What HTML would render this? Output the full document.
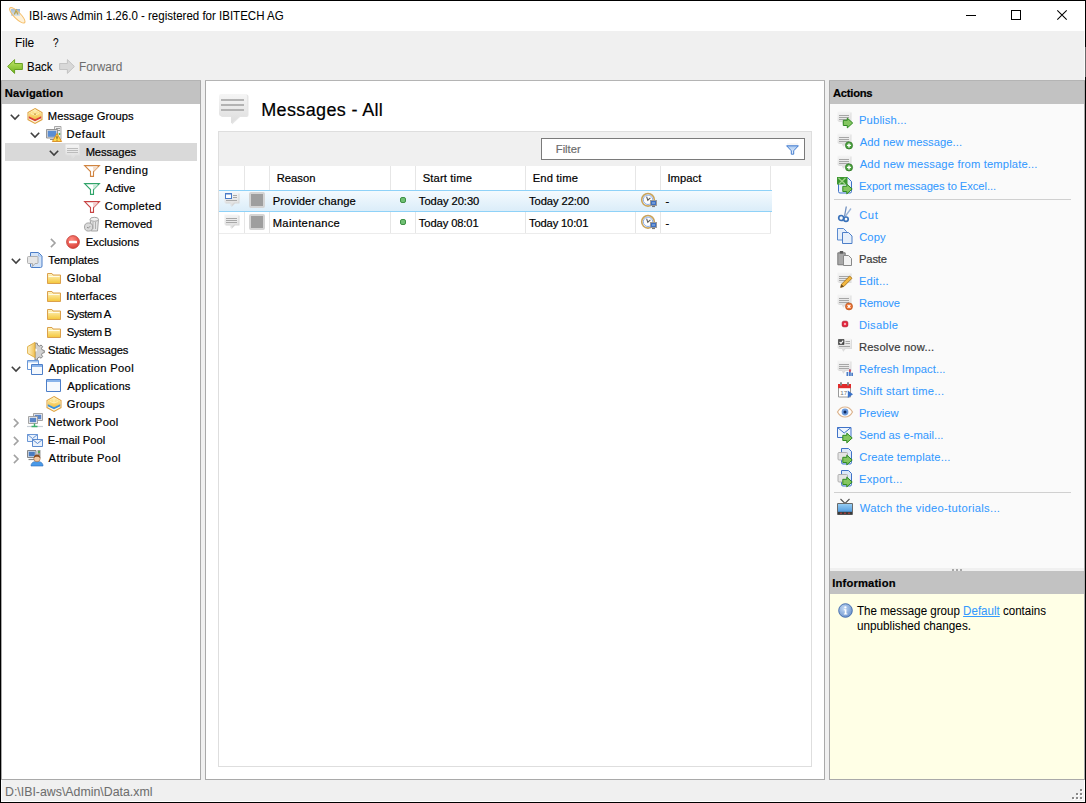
<!DOCTYPE html>
<html><head><meta charset="utf-8">
<style>
*{margin:0;padding:0;box-sizing:border-box}
html,body{width:1086px;height:803px;overflow:hidden;background:#000}
body{position:relative;font-family:"Liberation Sans",sans-serif;font-size:11px;color:#000}
.a{position:absolute}
.t{position:absolute;white-space:nowrap;line-height:16px;height:16px;-webkit-text-stroke:0.2px currentColor}
svg.i{position:absolute;overflow:visible}
</style></head><body>
<svg width="0" height="0" style="position:absolute">
<defs>
<linearGradient id="gMsg" x1="0" y1="0" x2="0" y2="1"><stop offset="0" stop-color="#f5f5f5"/><stop offset="1" stop-color="#dddddd"/></linearGradient>
<linearGradient id="gFold" x1="0" y1="0" x2="0" y2="1"><stop offset="0" stop-color="#fff6c8"/><stop offset="1" stop-color="#f4c638"/></linearGradient>
<linearGradient id="gHex" x1="0" y1="0" x2="0" y2="1"><stop offset="0" stop-color="#fff0b0"/><stop offset="1" stop-color="#f2c040"/></linearGradient>
</defs></svg>
<div class="a" style="left:1px;top:1px;width:1084px;height:801px;background:#f0f0f0;"></div>
<div class="a" style="left:1px;top:1px;width:1084px;height:30px;background:#ffffff;"></div>
<div class="a" style="left:1084px;top:31px;width:1px;height:49px;background:#fafafa;"></div>
<div class="a" style="left:1085px;top:47px;width:1px;height:30px;background:#6a6a6a;"></div>
<div class="a" style="left:1px;top:31px;width:1px;height:49px;background:#fafafa;"></div>
<div class="a" style="left:1px;top:801px;width:1084px;height:1px;background:#ffffff;"></div>
<div class="a" style="left:1084px;top:780px;width:1px;height:22px;background:#ffffff;"></div>
<div class="a" style="left:1px;top:780px;width:1px;height:22px;background:#fafafa;"></div>
<svg class="i" style="left:9px;top:7px" width="16" height="16" viewBox="0 0 16 16"><defs><linearGradient id="gTi" x1="0" y1="0" x2="0" y2="1"><stop offset="0" stop-color="#7fa6d2"/><stop offset="1" stop-color="#c8dcf2"/></linearGradient></defs><ellipse cx="8.3" cy="8.3" rx="10.4" ry="3.3" transform="rotate(45 8.3 8.3)" fill="#fde9c4" fill-opacity=".7"/><rect x="2" y="2" width="9" height="7" fill="url(#gTi)" opacity=".9"/><path d="M5.3 7.6L7.1 3.4 8.9 7.6" fill="none" stroke="#a08a22" stroke-width="1.3"/><ellipse cx="8.3" cy="8.3" rx="10.4" ry="3.3" transform="rotate(45 8.3 8.3)" fill="#fff5e0" fill-opacity=".25" stroke="#f4bd68" stroke-width=".95"/></svg>
<div class="t" style="left:29.35px;top:7.56px;font-size:12.80px;transform:scaleX(0.8996);transform-origin:0 0;-webkit-text-stroke:0.05px currentColor">IBI-aws Admin 1.26.0 - registered for IBITECH AG</div>
<div class="a" style="left:966px;top:15px;width:10px;height:1px;background:#000;"></div>
<div class="a" style="left:1011px;top:10px;width:10px;height:10px;background:transparent;border:1px solid #000"></div>
<svg class="i" style="left:1057px;top:10px" width="10" height="10" viewBox="0 0 10 10"><path d="M.3 .3l9.4 9.4M9.7 .3L.3 9.7" stroke="#000" stroke-width="1.05"/></svg>
<div class="t" style="left:15.39px;top:34.67px;font-size:12.50px;transform:scaleX(0.9547);transform-origin:0 0;-webkit-text-stroke:0.05px currentColor">File</div>
<div class="t" style="left:52.84px;top:34.67px;font-size:12.50px;transform:scaleX(0.8046);transform-origin:0 0;-webkit-text-stroke:0.05px currentColor">?</div>
<svg class="i" style="left:7px;top:59px" width="16" height="15" viewBox="0 0 16 15"><defs><linearGradient id="gBk" x1="0" y1="0" x2="0" y2="1"><stop offset="0" stop-color="#c4e86a"/><stop offset="1" stop-color="#6eb21c"/></linearGradient></defs><path d="M.6 7.5L7.6.6v3.9h7.8v6H7.6v3.9z" fill="url(#gBk)" stroke="#5e9a16" stroke-width=".9"/></svg>
<div class="t" style="left:26.52px;top:58.67px;font-size:12.50px;transform:scaleX(0.9189);transform-origin:0 0;-webkit-text-stroke:0.05px currentColor">Back</div>
<svg class="i" style="left:59px;top:59px" width="16" height="15" viewBox="0 0 16 15"><path d="M15.4 7.5L8.4.6v3.9H.6v6h7.8v3.9z" fill="#d8d8d8" stroke="#c0c0c0" stroke-width=".9"/></svg>
<div class="t" style="left:78.79px;top:58.67px;font-size:12.50px;color:#6d6d6d;transform:scaleX(0.9454);transform-origin:0 0;-webkit-text-stroke:0.05px currentColor">Forward</div>
<div class="a" style="left:1px;top:80px;width:200px;height:700px;background:#ffffff;border:1px solid #a9a9a9"></div>
<div class="a" style="left:2px;top:81px;width:198px;height:23px;background:#c2c2c2;"></div>
<div class="a" style="left:1px;top:80px;width:200px;height:1px;background:#b4b4b4;"></div>
<div class="t" style="left:4.84px;top:85.12px;font-size:11.20px;letter-spacing:0.106px;font-weight:bold">Navigation</div>
<div class="a" style="left:5px;top:143px;width:192px;height:18px;background:#d9d9d9;"></div>
<svg class="i" style="left:10px;top:114px;" width="10" height="6" viewBox="0 0 10 6"><path d="M.8 .8L5 5 9.2 .8" fill="none" stroke="#404040" stroke-width="1.6"/></svg>
<svg class="i" style="left:27px;top:108px;" width="16" height="16" viewBox="0 0 16 16"><path d="M8 .6l7 3.9v7.1L8 15.4 1 11.6V4.5z" fill="#fff8e0" stroke="#dfa444" stroke-width="1.1"/><path d="M1.8 4.9L8 1.5l6.2 3.4v3.6L8 11.4 1.8 8.5z" fill="url(#gHex)"/><path d="M8 1.5v5.5M4 5.5l4 1.5 4-1.5" fill="none" stroke="#fff4c0" stroke-width=".8"/><path d="M7.3 5.4h1.4v1.4H7.3z" fill="#b07a20"/><path d="M1.8 8.2L8 11.2l6.2-3v2L8 13.2 1.8 10.2z" fill="#d83e34"/></svg>
<div class="t" style="left:47.84px;top:108.12px;font-size:11.20px;letter-spacing:0.042px">Message Groups</div>
<svg class="i" style="left:30px;top:132px;" width="10" height="6" viewBox="0 0 10 6"><path d="M.8 .8L5 5 9.2 .8" fill="none" stroke="#404040" stroke-width="1.6"/></svg>
<svg class="i" style="left:46px;top:126px;" width="16" height="16" viewBox="0 0 16 16"><path d="M8.5 .5h6.5v13H8.5z" fill="#ececec" stroke="#a0a0a0" stroke-width=".9"/><path d="M10 2.5h4M10 4.5h4" stroke="#9a9a9a" stroke-width="1"/><circle cx="13.5" cy="8" r=".9" fill="#3cb040"/><path d="M.5 3.5h11v8.5H.5z" fill="#d8d8d8" stroke="#8c8c8c" stroke-width=".9"/><path d="M1.8 4.8h8.4v6H1.8z" fill="#5a8dd2"/><path d="M4 13.5h4" stroke="#8c8c8c" stroke-width="1"/><path d="M11 7.5l4.6 8h-9.2z" fill="#ffd84a" stroke="#d88a20" stroke-width=".9"/><path d="M11 10.2v2.6M11 13.8v.8" stroke="#6a4a10" stroke-width="1.1"/></svg>
<div class="t" style="left:66.54px;top:126.12px;font-size:11.20px;letter-spacing:0.480px">Default</div>
<svg class="i" style="left:49px;top:150px;" width="10" height="6" viewBox="0 0 10 6"><path d="M.8 .8L5 5 9.2 .8" fill="none" stroke="#404040" stroke-width="1.6"/></svg>
<svg class="i" style="left:65px;top:144px;" width="16" height="16" viewBox="0 0 16 16"><path d="M1.5 1.5h13.5v10H10.5l-3 3.5v-3.5H1.5z" fill="#e0e0e0"/><path d="M.5 .5h13.5v10H9.5l-3 3.5v-3.5H.5z" fill="url(#gMsg)"/><path d="M2 4.5h11M2 6.5h11M2 8.5h11" stroke="#bcbcbc" stroke-width="1"/></svg>
<div class="t" style="left:85.64px;top:144.12px;font-size:11.20px;letter-spacing:-0.070px">Messages</div>
<svg class="i" style="left:84px;top:165px;" width="16" height="12" viewBox="0 0 16 12"><path d="M.6 .6h14.8L9.5 6.6v4.8h-3V6.6z" fill="#fff" stroke="#d08440" stroke-width="1.1"/><path d="M9 2h5L9.5 6.5z" fill="#f4dcc8"/></svg>
<div class="t" style="left:104.54px;top:162.12px;font-size:11.20px;letter-spacing:0.382px">Pending</div>
<svg class="i" style="left:84px;top:183px;" width="16" height="12" viewBox="0 0 16 12"><path d="M.6 .6h14.8L9.5 6.6v4.8h-3V6.6z" fill="#fff" stroke="#30a46a" stroke-width="1.1"/><path d="M9 2h5L9.5 6.5z" fill="#c8ecd8"/></svg>
<div class="t" style="left:105.30px;top:180.12px;font-size:11.20px;letter-spacing:-0.127px">Active</div>
<svg class="i" style="left:84px;top:201px;" width="16" height="12" viewBox="0 0 16 12"><path d="M.6 .6h14.8L9.5 6.6v4.8h-3V6.6z" fill="#fff" stroke="#c84444" stroke-width="1.1"/><path d="M9 2h5L9.5 6.5z" fill="#f2cccc"/></svg>
<div class="t" style="left:104.79px;top:198.12px;font-size:11.20px;letter-spacing:0.294px">Completed</div>
<svg class="i" style="left:84px;top:216px;" width="16" height="16" viewBox="0 0 16 16"><path d="M6.2 3.5h8.3l-1 11.5H7.2z" fill="#e4e4e4" stroke="#9c9c9c" stroke-width=".9"/><path d="M9 6v7M11.5 6v7" stroke="#b0b0b0" stroke-width="1"/><ellipse cx="10.3" cy="3.3" rx="4.2" ry="2" fill="#f2f2f2" stroke="#9c9c9c" stroke-width=".9"/><circle cx="4.6" cy="11" r="4.1" fill="#dadada" stroke="#9c9c9c" stroke-width=".9"/><path d="M3 11l1.2 1.2 2-2" fill="none" stroke="#8a8a8a" stroke-width=".9"/></svg>
<div class="t" style="left:104.54px;top:216.12px;font-size:11.20px;letter-spacing:-0.014px">Removed</div>
<svg class="i" style="left:50px;top:238px;" width="6" height="10" viewBox="0 0 6 10"><path d="M.9 .9L5 5 .9 9.1" fill="none" stroke="#a2a2a2" stroke-width="1.6"/></svg>
<svg class="i" style="left:66px;top:235px;" width="14" height="14" viewBox="0 0 14 14"><defs><radialGradient id="gEx" cx=".4" cy=".3" r=".75"><stop offset="0" stop-color="#ff8a80"/><stop offset="1" stop-color="#d83c34"/></radialGradient></defs><circle cx="7" cy="7" r="6.4" fill="url(#gEx)" stroke="#c03a32" stroke-width=".8"/><rect x="3" y="5.7" width="8" height="2.6" rx=".6" fill="#fff"/></svg>
<div class="t" style="left:85.64px;top:234.12px;font-size:11.20px">Exclusions</div>
<svg class="i" style="left:11px;top:258px;" width="10" height="6" viewBox="0 0 10 6"><path d="M.8 .8L5 5 9.2 .8" fill="none" stroke="#404040" stroke-width="1.6"/></svg>
<svg class="i" style="left:27px;top:252px;" width="16" height="16" viewBox="0 0 16 16"><path d="M3.5 .5h8l3.5 3.5v10a1.5 1.5 0 0 1-1.5 1.5H5a1.5 1.5 0 0 1-1.5-1.5z" fill="#d4e4f8" stroke="#4c7ec8" stroke-width="1"/><path d="M11.5 .8v3.2h3.2" fill="none" stroke="#8fb2e4" stroke-width=".8"/><path d="M.5 5.5a1 1 0 0 1 1-1h8.5a1 1 0 0 1 1 1v5a1 1 0 0 1-1 1H8l-2.5 3v-3h-4a1 1 0 0 1-1-1z" fill="#e6e6e6" stroke="#a8a8a8" stroke-width=".9"/></svg>
<div class="t" style="left:48.35px;top:252.12px;font-size:11.20px;letter-spacing:-0.050px">Templates</div>
<svg class="i" style="left:47px;top:273px;" width="14" height="11" viewBox="0 0 14 11"><path d="M.5 .5h4.5l1 1.5h7.5v8.5h-13z" fill="url(#gFold)" stroke="#dba04c" stroke-width="1"/><path d="M1.5 3.5h11" stroke="#fffbe6" stroke-width="1"/></svg>
<div class="t" style="left:66.79px;top:270.12px;font-size:11.20px;letter-spacing:0.398px">Global</div>
<svg class="i" style="left:47px;top:291px;" width="14" height="11" viewBox="0 0 14 11"><path d="M.5 .5h4.5l1 1.5h7.5v8.5h-13z" fill="url(#gFold)" stroke="#dba04c" stroke-width="1"/><path d="M1.5 3.5h11" stroke="#fffbe6" stroke-width="1"/></svg>
<div class="t" style="left:66.28px;top:288.12px;font-size:11.20px;letter-spacing:0.138px">Interfaces</div>
<svg class="i" style="left:47px;top:309px;" width="14" height="11" viewBox="0 0 14 11"><path d="M.5 .5h4.5l1 1.5h7.5v8.5h-13z" fill="url(#gFold)" stroke="#dba04c" stroke-width="1"/><path d="M1.5 3.5h11" stroke="#fffbe6" stroke-width="1"/></svg>
<div class="t" style="left:66.79px;top:306.12px;font-size:11.20px;letter-spacing:-0.406px">System A</div>
<svg class="i" style="left:47px;top:327px;" width="14" height="11" viewBox="0 0 14 11"><path d="M.5 .5h4.5l1 1.5h7.5v8.5h-13z" fill="url(#gFold)" stroke="#dba04c" stroke-width="1"/><path d="M1.5 3.5h11" stroke="#fffbe6" stroke-width="1"/></svg>
<div class="t" style="left:66.79px;top:324.12px;font-size:11.20px;letter-spacing:-0.405px">System B</div>
<svg class="i" style="left:27px;top:342px;" width="16" height="16" viewBox="0 0 16 16"><defs><linearGradient id="gSt" x1="0" y1="0" x2="1" y2="0"><stop offset="0" stop-color="#fff4cc"/><stop offset="1" stop-color="#f0c050"/></linearGradient></defs><path d="M8 1.2h2.2l.5 2 1.6.9 1.8-1.1 1.5 1.6-1.1 1.8.8 1.6 2 .5v2.2l-2 .5-.8 1.6 1.1 1.8-1.5 1.6-1.8-1.1-1.6.9-.5 2H8z" fill="#d2d2d2" stroke="#7c7c7c" stroke-width=".9"/><circle cx="8.4" cy="8" r="1.6" fill="#fff"/><path d="M.6 4.6L8 .4v15.2L.6 11.4z" fill="url(#gSt)" stroke="#dcaa40" stroke-width=".9"/></svg>
<div class="t" style="left:48.09px;top:342.12px;font-size:11.20px;letter-spacing:-0.121px">Static Messages</div>
<svg class="i" style="left:11px;top:366px;" width="10" height="6" viewBox="0 0 10 6"><path d="M.8 .8L5 5 9.2 .8" fill="none" stroke="#404040" stroke-width="1.6"/></svg>
<svg class="i" style="left:27px;top:360px;" width="16" height="15" viewBox="0 0 16 15"><path d="M.5 .5h11v9H.5z" fill="#fff" stroke="#6a98d8" stroke-width="1"/><path d="M1 1h10v1.5H1z" fill="#a8c8f0"/><path d="M4.5 4.5h11v10h-11z" fill="#f4f8fd" stroke="#4c7ec8" stroke-width="1"/><path d="M5 5h10v2H5z" fill="#8ab4ea"/></svg>
<div class="t" style="left:48.60px;top:360.12px;font-size:11.20px;letter-spacing:0.322px">Application Pool</div>
<svg class="i" style="left:46px;top:379px;" width="15" height="13" viewBox="0 0 15 13"><path d="M.5 .5h14v12H.5z" fill="#f6f9fd" stroke="#4c7ec8" stroke-width="1"/><path d="M1 1h13v2H1z" fill="#8ab4ea"/></svg>
<div class="t" style="left:67.30px;top:378.12px;font-size:11.20px;letter-spacing:0.257px">Applications</div>
<svg class="i" style="left:46px;top:396px;" width="16" height="16" viewBox="0 0 16 16"><path d="M8 .6l7 3.9v7.1L8 15.4 1 11.6V4.5z" fill="#fff8e0" stroke="#dfa444" stroke-width="1.1"/><path d="M1.8 4.9L8 1.5l6.2 3.4v3.6L8 11.4 1.8 8.5z" fill="url(#gHex)"/><path d="M8 1.5v5.5M4 5.5l4 1.5 4-1.5" fill="none" stroke="#fff4c0" stroke-width=".8"/><path d="M1.8 8.2L8 11.2l6.2-3v2L8 13.2 1.8 10.2z" fill="#3a90d8"/></svg>
<div class="t" style="left:66.79px;top:396.12px;font-size:11.20px;letter-spacing:0.242px">Groups</div>
<svg class="i" style="left:13px;top:418px;" width="6" height="10" viewBox="0 0 6 10"><path d="M.9 .9L5 5 .9 9.1" fill="none" stroke="#a2a2a2" stroke-width="1.6"/></svg>
<svg class="i" style="left:27px;top:413px;" width="16" height="15" viewBox="0 0 16 15"><path d="M6.5 .5h9v7h-9z" fill="#ececf0" stroke="#9a9a9a" stroke-width=".9"/><path d="M7.8 1.8h6.4v4.4H7.8z" fill="#5a86c8"/><path d="M1.5 3.5h9v7h-9z" fill="#f0f0f0" stroke="#9a9a9a" stroke-width=".9"/><path d="M2.8 4.8h6.4v4.4H2.8z" fill="#5a86c8"/><path d="M0 13.5h16" stroke="#c8d0d8" stroke-width="1.2"/><path d="M4.5 13.5h6M7.5 10.5v3" stroke="#3cb06a" stroke-width="1.4"/></svg>
<div class="t" style="left:47.84px;top:414.12px;font-size:11.20px;letter-spacing:0.358px">Network Pool</div>
<svg class="i" style="left:13px;top:436px;" width="6" height="10" viewBox="0 0 6 10"><path d="M.9 .9L5 5 .9 9.1" fill="none" stroke="#a2a2a2" stroke-width="1.6"/></svg>
<svg class="i" style="left:27px;top:434px;" width="16" height="13" viewBox="0 0 16 13"><path d="M.5 .5h10v7H.5z" fill="#eaf2fc" stroke="#5a8ad0" stroke-width=".9"/><path d="M.5 .5l5 4 5-4" fill="none" stroke="#5a8ad0" stroke-width=".9"/><path d="M5.5 5.5h10v7h-10z" fill="#eaf2fc" stroke="#4c7ec8" stroke-width=".9"/><path d="M5.5 5.5l5 4 5-4" fill="none" stroke="#4c7ec8" stroke-width=".9"/></svg>
<div class="t" style="left:47.84px;top:432.12px;font-size:11.20px;letter-spacing:0.025px">E-mail Pool</div>
<svg class="i" style="left:13px;top:454px;" width="6" height="10" viewBox="0 0 6 10"><path d="M.9 .9L5 5 .9 9.1" fill="none" stroke="#a2a2a2" stroke-width="1.6"/></svg>
<svg class="i" style="left:27px;top:450px;" width="16" height="16" viewBox="0 0 16 16"><path d="M.5 .5h8.5v7H.5z" fill="#cfd8e4" stroke="#7a7a7a" stroke-width=".9"/><path d="M1.8 1.8h6v4.4h-6z" fill="#4a7cc0"/><path d="M10.5 0h3v8h-3z" fill="#9a9a9a"/><circle cx="12" cy="2" r=".9" fill="#3cb040"/><path d="M1.5 9.5h6" stroke="#888" stroke-width="1.2"/><path d="M4 16c0-3.4 2.6-4.6 6-4.6s6 1.2 6 4.6z" fill="#4a9ae8" stroke="#2a6ab8" stroke-width=".6"/><circle cx="10" cy="8.6" r="3.2" fill="#f4c8a0" stroke="#8a5a30" stroke-width=".5"/><path d="M6.8 8.2c0-2.4 1.4-3.6 3.2-3.6s3.2 1.2 3.2 3.6c-.8-1-1.8-1.4-3.2-1.4s-2.4.4-3.2 1.4z" fill="#8a4a1c"/></svg>
<div class="t" style="left:48.60px;top:450.12px;font-size:11.20px;letter-spacing:0.362px">Attribute Pool</div>
<div class="a" style="left:205px;top:80px;width:620px;height:700px;background:#ffffff;border:1px solid #a9a9a9"></div>
<div class="a" style="left:205px;top:80px;width:620px;height:1px;background:#b4b4b4;"></div>
<svg class="i" style="left:218px;top:93px" width="32" height="32" viewBox="0 0 32 32"><path d="M2.5 3.5a2 2 0 0 1 2-2h24a2 2 0 0 1 2 2v18.5a2 2 0 0 1-2 2H22l-8 7.5v-7.5H4.5a2 2 0 0 1-2-2z" fill="#d0d0d0" opacity=".55"/><path d="M1 3a2 2 0 0 1 2-2h24a2 2 0 0 1 2 2v18a2 2 0 0 1-2 2H21.5l-8.5 7.5V23H3a2 2 0 0 1-2-2z" fill="url(#gMsg)"/><path d="M3 7h23M3 12h23M3 17h23" stroke="#b3b3b3" stroke-width="2"/></svg>
<div class="t" style="left:261.27px;top:102.26px;font-size:18.00px;letter-spacing:0.348px">Messages - All</div>
<div class="a" style="left:218px;top:131px;width:594px;height:636px;background:#ffffff;border:1px solid #dedede"></div>
<div class="a" style="left:219px;top:132px;width:592px;height:34px;background:#f0f0f0;"></div>
<div class="a" style="left:541px;top:138px;width:264px;height:22px;background:#ffffff;border:1px solid #7a7a7a"></div>
<div class="t" style="left:555.80px;top:141.12px;font-size:11.20px;color:#6d6d6d">Filter</div>
<svg class="i" style="left:786px;top:144px" width="13" height="11" viewBox="0 0 13 11"><defs><linearGradient id="gFi" x1="0" y1="0" x2="0" y2="1"><stop offset="0" stop-color="#a8c8f0"/><stop offset="1" stop-color="#f4f8fe"/></linearGradient></defs><path d="M1 0h11" stroke="#e8e8e8" stroke-width=".8"/><path d="M.6 1.8h11.8L7.7 6.8v3.4H5.3V6.8z" fill="url(#gFi)" stroke="#3a76cc" stroke-width=".95"/></svg>
<div class="a" style="left:244px;top:166px;width:1px;height:67px;background:#e6e6e6;"></div>
<div class="a" style="left:269px;top:166px;width:1px;height:67px;background:#e6e6e6;"></div>
<div class="a" style="left:390px;top:166px;width:1px;height:67px;background:#e6e6e6;"></div>
<div class="a" style="left:415px;top:166px;width:1px;height:67px;background:#e6e6e6;"></div>
<div class="a" style="left:525px;top:166px;width:1px;height:67px;background:#e6e6e6;"></div>
<div class="a" style="left:635px;top:166px;width:1px;height:67px;background:#e6e6e6;"></div>
<div class="a" style="left:660px;top:166px;width:1px;height:67px;background:#e6e6e6;"></div>
<div class="a" style="left:770px;top:166px;width:1px;height:67px;background:#e6e6e6;"></div>
<div class="t" style="left:276.74px;top:170.12px;font-size:11.20px;letter-spacing:0.027px">Reason</div>
<div class="t" style="left:422.69px;top:170.12px;font-size:11.20px;letter-spacing:0.145px">Start time</div>
<div class="t" style="left:532.64px;top:170.12px;font-size:11.20px;letter-spacing:0.169px">End time</div>
<div class="t" style="left:667.38px;top:170.12px;font-size:11.20px;letter-spacing:0.084px">Impact</div>
<div class="a" style="left:219px;top:190px;width:553px;height:22px;background:linear-gradient(#f4fafe,#dbedf9);border-top:1px solid #8fd2f8;border-bottom:1px solid #8fd2f8"></div>
<div class="a" style="left:219px;top:233px;width:552px;height:1px;background:#ececec;"></div>
<svg class="i" style="left:224px;top:192px" width="15" height="15" viewBox="0 0 15 15"><path d="M1.5 1.5h14v10H11l-3.5 3.5v-3.5h-6z" fill="#d6d6d6"/><path d="M.5 .5h14v10H10l-3.5 3.5v-3.5h-6z" fill="url(#gMsg)"/><rect x="1" y="1" width="7" height="6" fill="#4a7cc8"/><rect x="2" y="2.5" width="5" height="3.5" fill="#fff"/><path d="M9 3.5h4M9 5.5h4M2 8.5h11" stroke="#a8a8a8" stroke-width="1"/></svg>
<div class="a" style="left:249px;top:192px;width:16px;height:16px;background:#9e9e9e;border:2px solid #d4d4d4;border-radius:2px"></div>
<div class="t" style="left:272.74px;top:193.12px;font-size:11.20px;letter-spacing:0.112px">Provider change</div>
<div class="a" style="left:400px;top:197px;width:6px;height:6px;background:#70c074;border:1px solid #3f9045;border-radius:2px"></div>
<div class="t" style="left:418.85px;top:193.12px;font-size:11.20px;letter-spacing:-0.053px">Today 20:30</div>
<div class="t" style="left:529.05px;top:193.12px;font-size:11.20px;letter-spacing:-0.083px">Today 22:00</div>
<svg class="i" style="left:641px;top:192px" width="16" height="16" viewBox="0 0 16 16"><circle cx="7" cy="7.8" r="6.3" fill="#fdfdfd" stroke="#c9a35a" stroke-width="1.6"/><circle cx="7" cy="7.8" r="4.7" fill="none" stroke="#7aa2e4" stroke-width=".9"/><path d="M5.6 4.6l1.2 3.6 2.6-2.4" fill="none" stroke="#585858" stroke-width="1.1"/><rect x="9.5" y="8.5" width="6" height="5" fill="#3e6fc0" stroke="#9a9a9a" stroke-width="1"/><rect x="11" y="10" width="3" height="2" fill="#6f9ad8"/><path d="M11 14.5h3" stroke="#777" stroke-width="1.2"/></svg>
<div class="t" style="left:665.40px;top:193.19px;font-size:11.00px">-</div>
<svg class="i" style="left:224px;top:214px" width="15" height="15" viewBox="0 0 15 15"><path d="M1.5 1.5h14v10H11l-3.5 3.5v-3.5h-6z" fill="#d6d6d6"/><path d="M.5 .5h14v10H10l-3.5 3.5v-3.5h-6z" fill="url(#gMsg)"/><path d="M2 4.5h11M2 6.5h11M2 8.5h11" stroke="#a8a8a8" stroke-width="1"/></svg>
<div class="a" style="left:249px;top:214px;width:16px;height:16px;background:#9e9e9e;border:2px solid #d4d4d4;border-radius:2px"></div>
<div class="t" style="left:272.74px;top:215.12px;font-size:11.20px;letter-spacing:0.303px">Maintenance</div>
<div class="a" style="left:400px;top:219px;width:6px;height:6px;background:#70c074;border:1px solid #3f9045;border-radius:2px"></div>
<div class="t" style="left:418.85px;top:215.12px;font-size:11.20px;letter-spacing:-0.113px">Today 08:01</div>
<div class="t" style="left:529.05px;top:215.12px;font-size:11.20px;letter-spacing:-0.163px">Today 10:01</div>
<svg class="i" style="left:641px;top:214px" width="16" height="16" viewBox="0 0 16 16"><circle cx="7" cy="7.8" r="6.3" fill="#fdfdfd" stroke="#c9a35a" stroke-width="1.6"/><circle cx="7" cy="7.8" r="4.7" fill="none" stroke="#7aa2e4" stroke-width=".9"/><path d="M5.6 4.6l1.2 3.6 2.6-2.4" fill="none" stroke="#585858" stroke-width="1.1"/><rect x="9.5" y="8.5" width="6" height="5" fill="#3e6fc0" stroke="#9a9a9a" stroke-width="1"/><rect x="11" y="10" width="3" height="2" fill="#6f9ad8"/><path d="M11 14.5h3" stroke="#777" stroke-width="1.2"/></svg>
<div class="t" style="left:665.40px;top:215.19px;font-size:11.00px">-</div>
<div class="a" style="left:829px;top:80px;width:256px;height:700px;background:#fafafa;border:1px solid #a9a9a9"></div>
<div class="a" style="left:829px;top:80px;width:256px;height:1px;background:#b4b4b4;"></div>
<div class="a" style="left:830px;top:81px;width:254px;height:23px;background:#c2c2c2;"></div>
<div class="t" style="left:833.05px;top:85.12px;font-size:11.20px;letter-spacing:-0.262px;font-weight:bold">Actions</div>
<svg class="i" style="left:837px;top:111px" width="16" height="16" viewBox="0 0 16 16"><path d="M1.5 1.5h13v9.5H8.5l-2.5 3v-3h-4.5z" fill="#dcdcdc"/><path d="M.5 .5h13v9.5H7.5l-2.5 3v-3H.5z" fill="url(#gMsg)"/><path d="M2 4.5h10M2 6.5h10M2 8.5h10" stroke="#a6a6a6" stroke-width="1"/><path d="M6.3 9.3h4V7.1l5.4 4.9-5.4 4.9v-2.4h-4z" fill="#84c660" stroke="#2f8a22" stroke-width="1"/></svg>
<div class="t" style="left:858.94px;top:112.12px;font-size:11.20px;letter-spacing:0.190px;color:#3399ff;-webkit-text-stroke:0.05px currentColor">Publish...</div>
<svg class="i" style="left:837px;top:133px" width="16" height="16" viewBox="0 0 16 16"><path d="M1.5 1.5h13v9.5H8.5l-2.5 3v-3h-4.5z" fill="#dcdcdc"/><path d="M.5 .5h13v9.5H7.5l-2.5 3v-3H.5z" fill="url(#gMsg)"/><path d="M2 4.5h10M2 6.5h10M2 8.5h10" stroke="#a6a6a6" stroke-width="1"/><circle cx="12" cy="12.4" r="3.6" fill="#4ea442" stroke="#2c7022" stroke-width=".7"/><path d="M12 10.4v4M10 12.4h4" stroke="#fff" stroke-width="1.4"/></svg>
<div class="t" style="left:859.70px;top:134.12px;font-size:11.20px;letter-spacing:0.056px;color:#3399ff;-webkit-text-stroke:0.05px currentColor">Add new message...</div>
<svg class="i" style="left:837px;top:155px" width="16" height="16" viewBox="0 0 16 16"><path d="M1.5 1.5h13v9.5H8.5l-2.5 3v-3h-4.5z" fill="#dcdcdc"/><path d="M.5 .5h13v9.5H7.5l-2.5 3v-3H.5z" fill="url(#gMsg)"/><path d="M2 4.5h10M2 6.5h10M2 8.5h10" stroke="#a6a6a6" stroke-width="1"/><circle cx="12" cy="12.4" r="3.6" fill="#4ea442" stroke="#2c7022" stroke-width=".7"/><path d="M12 10.4v4M10 12.4h4" stroke="#fff" stroke-width="1.4"/></svg>
<div class="t" style="left:859.70px;top:156.12px;font-size:11.20px;letter-spacing:0.159px;color:#3399ff;-webkit-text-stroke:0.05px currentColor">Add new message from template...</div>
<svg class="i" style="left:837px;top:177px" width="16" height="16" viewBox="0 0 16 16"><path d="M1.5 .5h9l4 4v10a1.5 1.5 0 0 1-1.5 1.5h-10a1.5 1.5 0 0 1-1.5-1.5z" fill="#e8f1fc" stroke="#4073c8" stroke-width="1"/><path d="M0 0h10.5v7.5H0z" fill="#3c9630"/><path d="M1.5 1l6.5 6M8.5 1L2 7" stroke="#9fd488" stroke-width="1.3"/><path d="M5.8 9.3h4V7.1l5.4 4.9-5.4 4.9v-2.4h-4z" fill="#84c660" stroke="#2f8a22" stroke-width="1"/></svg>
<div class="t" style="left:858.94px;top:178.12px;font-size:11.20px;letter-spacing:-0.056px;color:#3399ff;-webkit-text-stroke:0.05px currentColor">Export messages to Excel...</div>
<div class="a" style="left:834px;top:199px;width:237px;height:1px;background:#d0d0d0;"></div>
<svg class="i" style="left:837px;top:206px" width="16" height="16" viewBox="0 0 16 16"><path d="M9.3 .5L7.5 10.5" stroke="#6f8fc0" stroke-width="1.3"/><path d="M14 2.5l-5.8 8" stroke="#9ab4d8" stroke-width="1.3"/><circle cx="4.2" cy="12" r="2.5" fill="none" stroke="#3a72ba" stroke-width="1.7"/><circle cx="9" cy="13.2" r="2.2" fill="none" stroke="#3a72ba" stroke-width="1.7"/></svg>
<div class="t" style="left:859.19px;top:207.12px;font-size:11.20px;letter-spacing:0.600px;color:#3399ff;-webkit-text-stroke:0.05px currentColor">Cut</div>
<svg class="i" style="left:837px;top:228px" width="16" height="16" viewBox="0 0 16 16"><path d="M.5 .5h6l3 3v8.5h-9z" fill="#e6effa" stroke="#5a8ad0" stroke-width="1"/><path d="M5.5 4.5h6l3.5 3.5v7.5h-9.5z" fill="#e6effa" stroke="#4c7ec8" stroke-width="1"/></svg>
<div class="t" style="left:859.19px;top:229.12px;font-size:11.20px;letter-spacing:0.097px;color:#3399ff;-webkit-text-stroke:0.05px currentColor">Copy</div>
<svg class="i" style="left:837px;top:250px" width="16" height="16" viewBox="0 0 16 16"><path d="M.8 2.8h7.4v12H.8z" fill="#a8a8a8" stroke="#707070" stroke-width=".9"/><path d="M2.8 1h3.4v2.6H2.8z" fill="#5a5a5a"/><path d="M6.5 5.5h5l3 3v7h-8z" fill="#f2f2f2" stroke="#888" stroke-width="1"/></svg>
<div class="t" style="left:858.94px;top:251.12px;font-size:11.20px;letter-spacing:-0.123px;color:#3b3b3b">Paste</div>
<svg class="i" style="left:837px;top:272px" width="16" height="16" viewBox="0 0 16 16"><path d="M1.5 1.5h13v9.5H8.5l-2.5 3v-3h-4.5z" fill="#dcdcdc"/><path d="M.5 .5h13v9.5H7.5l-2.5 3v-3H.5z" fill="url(#gMsg)"/><path d="M2 4.5h10M2 6.5h10M2 8.5h10" stroke="#a6a6a6" stroke-width="1"/><path d="M3.6 15.4l.9-3.2 8.2-8.2 2.3 2.3-8.2 8.2z" fill="#f4b840" stroke="#9c6a10" stroke-width=".8"/><path d="M3.6 15.4l.9-3.2 2.3 2.3z" fill="#6a4a20"/></svg>
<div class="t" style="left:858.94px;top:273.12px;font-size:11.20px;letter-spacing:0.170px;color:#3399ff;-webkit-text-stroke:0.05px currentColor">Edit...</div>
<svg class="i" style="left:837px;top:294px" width="16" height="16" viewBox="0 0 16 16"><path d="M1.5 1.5h13v9.5H8.5l-2.5 3v-3h-4.5z" fill="#dcdcdc"/><path d="M.5 .5h13v9.5H7.5l-2.5 3v-3H.5z" fill="url(#gMsg)"/><path d="M2 4.5h10M2 6.5h10M2 8.5h10" stroke="#a6a6a6" stroke-width="1"/><circle cx="12" cy="12.4" r="3.5" fill="#ec7234" stroke="#b04c12" stroke-width=".7"/><path d="M10.6 11l2.8 2.8M13.4 11l-2.8 2.8" stroke="#fff" stroke-width="1.1"/></svg>
<div class="t" style="left:858.94px;top:295.12px;font-size:11.20px;letter-spacing:-0.135px;color:#3399ff;-webkit-text-stroke:0.05px currentColor">Remove</div>
<svg class="i" style="left:837px;top:316px" width="16" height="16" viewBox="0 0 16 16"><rect x="5.2" y="5.2" width="5.6" height="5.6" rx="1.6" fill="#e8203a" stroke="#a81224" stroke-width=".7"/><rect x="6.9" y="6.9" width="2.2" height="2.2" fill="#f7a8b2"/></svg>
<div class="t" style="left:858.94px;top:317.12px;font-size:11.20px;letter-spacing:0.276px;color:#3399ff;-webkit-text-stroke:0.05px currentColor">Disable</div>
<svg class="i" style="left:837px;top:338px" width="16" height="16" viewBox="0 0 16 16"><path d="M1.5 1.5h13.5v9.5H8.5l-2.5 3v-3h-4.5z" fill="#dcdcdc"/><path d="M.5 .5h13.5v9.5H7.5l-2.5 3v-3H.5z" fill="url(#gMsg)"/><path d="M1.5 1.5h5.5v5H1.5z" fill="#505050" stroke="#303030" stroke-width=".6"/><path d="M2.6 4l1.4 1.4 2.2-2.8" fill="none" stroke="#fff" stroke-width="1.1"/><path d="M8.5 3.5h4.5M8.5 5.5h4.5M2 8.5h11" stroke="#a6a6a6" stroke-width="1"/></svg>
<div class="t" style="left:858.94px;top:339.12px;font-size:11.20px;letter-spacing:0.183px;color:#3b3b3b">Resolve now...</div>
<svg class="i" style="left:837px;top:360px" width="16" height="16" viewBox="0 0 16 16"><path d="M1.5 1.5h13v9.5H8.5l-2.5 3v-3h-4.5z" fill="#dcdcdc"/><path d="M.5 .5h13v9.5H7.5l-2.5 3v-3H.5z" fill="url(#gMsg)"/><path d="M2 4.5h10M2 6.5h10M2 8.5h10" stroke="#a6a6a6" stroke-width="1"/><path d="M9.5 12h1.8v4H9.5zM12 9.5h1.8V16H12zM14.3 12.8h1.7V16h-1.7z" fill="#4c7ec8"/><path d="M12 9.5h1.8v2.2H12z" fill="#e84848"/></svg>
<div class="t" style="left:858.94px;top:361.12px;font-size:11.20px;letter-spacing:0.082px;color:#3399ff;-webkit-text-stroke:0.05px currentColor">Refresh Impact...</div>
<svg class="i" style="left:837px;top:382px" width="16" height="16" viewBox="0 0 16 16"><path d="M1.5 2.5h12v12.5h-12z" fill="#fff" stroke="#9a9a9a" stroke-width="1"/><path d="M1 2h13v4.2H1z" fill="#e02a2a"/><path d="M3 .3h2v3.2H3zM10 .3h2v3.2h-2z" fill="#8a8a8a"/><text x="3.3" y="13.2" font-size="6.2" font-family="Liberation Sans" fill="#707070">17</text><path d="M10.8 8.6l5.2 3.7-5.2 3.7z" fill="#3a72c8"/></svg>
<div class="t" style="left:859.19px;top:383.12px;font-size:11.20px;letter-spacing:0.221px;color:#3399ff;-webkit-text-stroke:0.05px currentColor">Shift start time...</div>
<svg class="i" style="left:837px;top:404px" width="16" height="16" viewBox="0 0 16 16"><path d="M.5 8C2.5 4.3 5 3 8 3s5.5 1.3 7.5 5c-2 3.7-4.5 5-7.5 5S2.5 11.7.5 8z" fill="#fff" stroke="#dcb48e" stroke-width="1.2"/><circle cx="8" cy="8" r="3.4" fill="#6c9adc"/><circle cx="8" cy="8" r="1.5" fill="#0e2a60"/></svg>
<div class="t" style="left:858.94px;top:405.12px;font-size:11.20px;letter-spacing:-0.033px;color:#3399ff;-webkit-text-stroke:0.05px currentColor">Preview</div>
<svg class="i" style="left:837px;top:426px" width="16" height="16" viewBox="0 0 16 16"><path d="M.5 1.5h13.5v10H.5z" fill="#eef5fd" stroke="#4073c8" stroke-width="1"/><path d="M.5 1.5l6.7 5.5 6.8-5.5" fill="none" stroke="#4073c8" stroke-width="1"/><path d="M5.8 9.3h4V7.1l5.4 4.9-5.4 4.9v-2.4h-4z" fill="#84c660" stroke="#2f8a22" stroke-width="1"/></svg>
<div class="t" style="left:859.19px;top:427.12px;font-size:11.20px;letter-spacing:0.020px;color:#3399ff;-webkit-text-stroke:0.05px currentColor">Send as e-mail...</div>
<svg class="i" style="left:837px;top:448px" width="16" height="16" viewBox="0 0 16 16"><path d="M4.5 .5h7l3 3v11a1.5 1.5 0 0 1-1.5 1.5H6a1.5 1.5 0 0 1-1.5-1.5z" fill="#dde9f8" stroke="#4073c8" stroke-width="1"/><path d="M1 5.5a1 1 0 0 1 1-1h7.5a1 1 0 0 1 1 1v5.5a1 1 0 0 1-1 1H2a1 1 0 0 1-1-1z" fill="#e4e4e4" stroke="#a8a8a8" stroke-width=".9"/><path d="M5.8 9.3h4V7.1l5.4 4.9-5.4 4.9v-2.4h-4z" fill="#84c660" stroke="#2f8a22" stroke-width="1"/></svg>
<div class="t" style="left:859.19px;top:449.12px;font-size:11.20px;letter-spacing:0.126px;color:#3399ff;-webkit-text-stroke:0.05px currentColor">Create template...</div>
<svg class="i" style="left:837px;top:470px" width="16" height="16" viewBox="0 0 16 16"><path d="M4.5 .5h7l3 3v11a1.5 1.5 0 0 1-1.5 1.5H6a1.5 1.5 0 0 1-1.5-1.5z" fill="#dde9f8" stroke="#4073c8" stroke-width="1"/><path d="M1 5.5a1 1 0 0 1 1-1h7.5a1 1 0 0 1 1 1v5.5a1 1 0 0 1-1 1H2a1 1 0 0 1-1-1z" fill="#e4e4e4" stroke="#a8a8a8" stroke-width=".9"/><path d="M5.8 9.3h4V7.1l5.4 4.9-5.4 4.9v-2.4h-4z" fill="#84c660" stroke="#2f8a22" stroke-width="1"/></svg>
<div class="t" style="left:858.94px;top:471.12px;font-size:11.20px;letter-spacing:0.230px;color:#3399ff;-webkit-text-stroke:0.05px currentColor">Export...</div>
<div class="a" style="left:834px;top:492px;width:237px;height:1px;background:#d0d0d0;"></div>
<svg class="i" style="left:837px;top:499px" width="16" height="16" viewBox="0 0 16 16"><path d="M3.5 0l4.5 4.5L12.5 0" fill="none" stroke="#505050" stroke-width="1.1"/><defs><linearGradient id="gTv" x1="0" y1="0" x2="0" y2="1"><stop offset="0" stop-color="#9ad0f4"/><stop offset="1" stop-color="#3a8ad8"/></linearGradient></defs><path d="M.5 4.5h15v11h-15z" fill="url(#gTv)" stroke="#6a6a6a" stroke-width="1"/><path d="M1 12.8h14v2.7H1z" fill="#3a3a3a"/><path d="M3 14.2h2M7 14.2h2M11 14.2h2" stroke="#d04040" stroke-width=".9"/></svg>
<div class="t" style="left:859.70px;top:500.12px;font-size:11.20px;letter-spacing:0.304px;color:#3399ff;-webkit-text-stroke:0.05px currentColor">Watch the video-tutorials...</div>
<div class="a" style="left:830px;top:568px;width:254px;height:3px;background:#f0f0f0;"></div>
<div class="a" style="left:952px;top:569px;width:2px;height:2px;background:#a8a8a8;"></div>
<div class="a" style="left:956px;top:569px;width:2px;height:2px;background:#a8a8a8;"></div>
<div class="a" style="left:960px;top:569px;width:2px;height:2px;background:#a8a8a8;"></div>
<div class="a" style="left:830px;top:571px;width:254px;height:23px;background:#c2c2c2;"></div>
<div class="t" style="left:832.24px;top:575.12px;font-size:11.20px;letter-spacing:0.173px;font-weight:bold">Information</div>
<div class="a" style="left:830px;top:594px;width:254px;height:185px;background:#ffffe6;"></div>
<svg class="i" style="left:838px;top:603px" width="15" height="15" viewBox="0 0 15 15"><defs><radialGradient id="gInf" cx=".4" cy=".35" r=".7"><stop offset="0" stop-color="#c4daf4"/><stop offset="1" stop-color="#6890cc"/></radialGradient></defs><circle cx="7.5" cy="7.5" r="6.8" fill="url(#gInf)" stroke="#3d68ac" stroke-width=".9"/><path d="M5.8 6.2h2.6v4.4h1v1H5.8v-1h1V7.2h-1z" fill="#fff"/><circle cx="7.4" cy="4.3" r="1.15" fill="#fff"/></svg>
<div class="t" style="left:857.34px;top:603.17px;font-size:12.50px;transform:scaleX(0.9254);transform-origin:0 0;-webkit-text-stroke:0.05px currentColor">The message group <span style="color:#3399ff;text-decoration:underline">Default</span> contains</div>
<div class="t" style="left:856.80px;top:617.67px;font-size:12.50px;transform:scaleX(0.9373);transform-origin:0 0;-webkit-text-stroke:0.05px currentColor">unpublished changes.</div>
<div class="t" style="left:4.76px;top:783.67px;font-size:12.50px;color:#6d6d6d;transform:scaleX(0.9870);transform-origin:0 0;-webkit-text-stroke:0.05px currentColor">D:\IBI-aws\Admin\Data.xml</div>
<svg class="i" style="left:1072px;top:789px" width="11" height="11" viewBox="0 0 11 11"><g fill="#ffffff"><rect x="9" y="1" width="2" height="2"/><rect x="5" y="5" width="2" height="2"/><rect x="9" y="5" width="2" height="2"/><rect x="1" y="9" width="2" height="2"/><rect x="5" y="9" width="2" height="2"/><rect x="9" y="9" width="2" height="2"/></g><g fill="#8a8a8a"><rect x="8" y="0" width="2" height="2"/><rect x="4" y="4" width="2" height="2"/><rect x="8" y="4" width="2" height="2"/><rect x="0" y="8" width="2" height="2"/><rect x="4" y="8" width="2" height="2"/><rect x="8" y="8" width="2" height="2"/></g></svg>
</body></html>
